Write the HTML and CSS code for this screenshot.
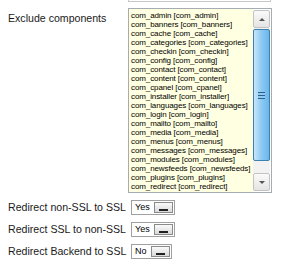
FILE: index.html
```html
<!DOCTYPE html>
<html lang="en">
<head>
  <meta charset="UTF-8" />
  <title>SSL options</title>
  <link rel="stylesheet" href="styles.css">
</head>
<body>

<div class="form">
  <div class="stub"></div>

  <div class="row row-list">
    <label class="label">Exclude components</label>
    <div class="listbox">
      <ul class="options">
        <li>com_admin [com_admin]</li>
        <li>com_banners [com_banners]</li>
        <li>com_cache [com_cache]</li>
        <li>com_categories [com_categories]</li>
        <li>com_checkin [com_checkin]</li>
        <li>com_config [com_config]</li>
        <li>com_contact [com_contact]</li>
        <li>com_content [com_content]</li>
        <li>com_cpanel [com_cpanel]</li>
        <li>com_installer [com_installer]</li>
        <li>com_languages [com_languages]</li>
        <li>com_login [com_login]</li>
        <li>com_mailto [com_mailto]</li>
        <li>com_media [com_media]</li>
        <li>com_menus [com_menus]</li>
        <li>com_messages [com_messages]</li>
        <li>com_modules [com_modules]</li>
        <li>com_newsfeeds [com_newsfeeds]</li>
        <li>com_plugins [com_plugins]</li>
        <li>com_redirect [com_redirect]</li>
      </ul>
      <!-- scrollbar -->
      <div class="scrollbar">
        <div class="sb-btn"><span class="arrow-up"></span></div>
        <div class="track">
          <div class="thumb"><span class="grip"></span></div>
        </div>
        <div class="sb-btn"><span class="arrow-down"></span></div>
      </div>
    </div>
  </div>

  <div class="row">
    <label class="label">Redirect non-SSL to SSL</label>
    <div class="select"><span class="value">Yes</span><span class="drop"></span></div>
  </div>
  <div class="row">
    <label class="label">Redirect SSL to non-SSL</label>
    <div class="select"><span class="value">Yes</span><span class="drop"></span></div>
  </div>
  <div class="row">
    <label class="label">Redirect Backend to SSL</label>
    <div class="select"><span class="value">No</span><span class="drop"></span></div>
  </div>
</div>

</body>
</html>
```

FILE: styles.css
```css
body {
  margin: 0;
  background: #fff;
  font-family: 'Liberation Sans', Arial, sans-serif;
  color: #1a1a1a;
}
.form {
  padding: 0 0 0 8px;
}
.stub {
  margin-left: 120px;
  width: 141px;
  height: 1px;
  border: 1px solid #c8c8c8;
  border-top: none;
}
.row {
  display: flex;
  align-items: center;
  margin-top: 7px;
}
.row-list {
  align-items: flex-start;
  margin-top: 6px;
  margin-bottom: 5px;
}
.label {
  flex: none;
  width: 123px;
  font-size: 10.6px;
  line-height: 13px;
  white-space: nowrap;
}
.row-list .label {
  width: 120px;
  padding-top: 4px;
}
/* list box */
.listbox {
  display: flex;
  width: 142px;
  height: 183px;
  border: 1px solid #a5acb2;
  background: #ffffe1;
}
.options {
  flex: 1;
  list-style: none;
  margin: 0;
  padding: 2px 0 0 2px;
  font-size: 8px;
  line-height: 9px;
  letter-spacing: -0.1px;
  color: #000;
  white-space: nowrap;
  overflow: hidden;
}
.scrollbar {
  width: 17px;
  display: flex;
  flex-direction: column;
  background: #fff;
  padding: 1px 1px 1px 0;
}
.sb-btn {
  height: 16px;
  border: 1px solid #c3c3c3;
  border-radius: 2px;
  background: linear-gradient(#fafafa, #e4e4e4);
  display: flex;
  align-items: center;
  justify-content: center;
}
.arrow-up, .arrow-down {
  width: 0;
  height: 0;
  border-left: 3px solid transparent;
  border-right: 3px solid transparent;
}
.arrow-up { border-bottom: 3px solid #555; }
.arrow-down { border-top: 3px solid #555; }
.track {
  flex: 1;
  background: #f2f2f2;
  padding: 1px 0;
}
.thumb {
  height: 130px;
  border: 1px solid #3c7fb1;
  border-radius: 2px;
  background: linear-gradient(90deg, #c8e6fa, #8ccaf3 50%, #6cb6ea);
  display: flex;
  align-items: center;
  justify-content: center;
}
.grip {
  width: 7px;
  height: 5px;
  border-top: 1px solid #2f5f8a;
  border-bottom: 1px solid #2f5f8a;
  background: linear-gradient(#8ccaf3 2px, #2f5f8a 2px, #2f5f8a 3px, #8ccaf3 3px);
}
/* yes / no select */
.select {
  display: flex;
  align-items: center;
  height: 11px;
  padding: 1px;
  border: 1px solid #a0a0a0;
  background: #fff;
}
.value {
  font-size: 9px;
  line-height: 11px;
  padding: 0 4px 0 2px;
  color: #000;
}
.drop {
  position: relative;
  width: 17px;
  height: 9px;
  border: 1px solid #8a8a8a;
  background: linear-gradient(#fafafa, #d9d9d9);
}
.drop::after {
  content: "";
  position: absolute;
  left: 4px;
  bottom: 1px;
  width: 9px;
  height: 2px;
  background: #222;
}
```
